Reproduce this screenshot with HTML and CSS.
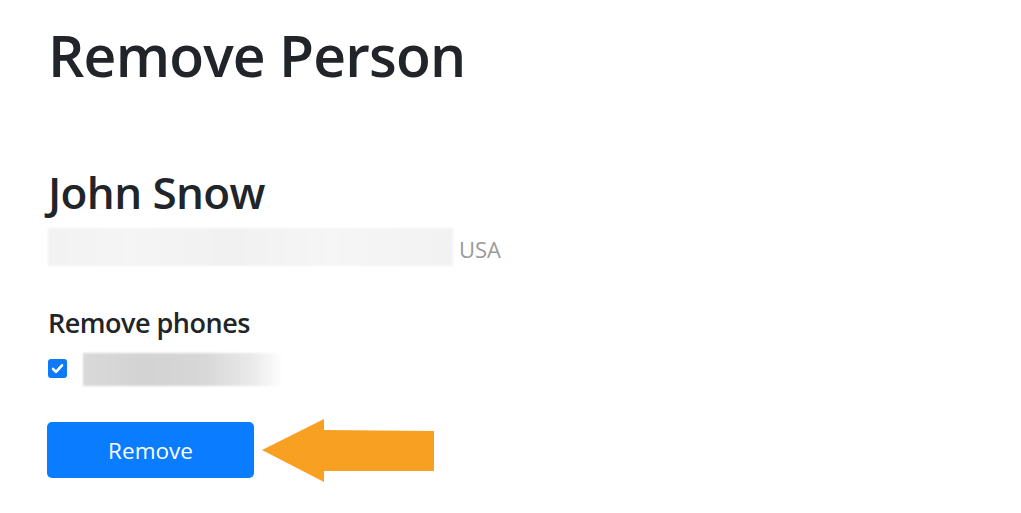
FILE: index.html
```html
<!DOCTYPE html>
<html lang="en">
<head>
<meta charset="utf-8">
<title>Remove Person</title>
<link rel="stylesheet" href="styles.css">
</head>
<body>
<main class="page">
  <h1 class="title">Remove Person</h1>
  <section class="person">
    <h2 class="name">John Snow</h2>
    <div class="address">
      <span class="blur blur-address"></span>
      <span class="country">USA</span>
    </div>
  </section>
  <section class="phones">
    <h3 class="phones-title">Remove phones</h3>
    <label class="phone-row">
      <span class="check">
        <svg viewBox="0 0 16 16" width="15" height="15"><path d="M3.2 8.4 L6.4 11.6 L12.8 4.6" fill="none" stroke="#fff" stroke-width="2.8" stroke-linecap="round" stroke-linejoin="round"/></svg>
      </span>
      <span class="blur blur-phone"></span>
    </label>
  </section>
  <div class="actions">
    <button class="btn" type="button">Remove</button>
    <svg class="arrow" viewBox="0 0 172 64" width="172" height="64">
      <polygon points="0,31 62,0 62,11 172,12 172,52 62,52 62,63" fill="#f7a021"/>
    </svg>
  </div>
</main>
</body>
</html>
```

FILE: styles.css
```css
* { box-sizing: border-box; }
html, body { margin: 0; background: #fff; }
body {
  font-family: "Open Sans", "Noto Sans", "Liberation Sans", sans-serif;
  color: #212529;
}
.page {
  padding: 20px 0 0 48px;
}
.title {
  margin: 0;
  font-size: 57px;
  font-weight: 600;
  line-height: 70px;
  letter-spacing: -0.8px;
}
.person {
  margin-top: 76px;
}
.name {
  margin: 0;
  font-size: 44px;
  font-weight: 600;
  line-height: 52px;
  letter-spacing: -0.6px;
}
.address {
  display: flex;
  align-items: center;
  margin-top: 10px;
}
.blur { display: block; }
.blur-address {
  width: 405px;
  height: 38px;
  background: linear-gradient(90deg, #f2f2f2, #f5f5f5 20%, #f1f1f1 45%, #f6f6f6 70%, #f2f2f2);
  filter: blur(1px);
}
.country {
  margin-left: 6px;
  margin-top: 4px;
  font-size: 22px;
  color: #9a9a9a;
}
.phones { margin-top: 40px; }
.phones-title {
  margin: 0;
  font-size: 27px;
  font-weight: 600;
  line-height: 34px;
  letter-spacing: -0.5px;
}
.phone-row {
  display: flex;
  align-items: center;
  margin-top: 10px;
}
.check {
  width: 19px;
  height: 19px;
  border-radius: 3px;
  background: #0d7bf7;
  display: flex;
  align-items: center;
  justify-content: center;
}
.blur-phone {
  margin-left: 16px;
  width: 200px;
  height: 33px;
  margin-top: 3px;
  background: linear-gradient(90deg, #d9d9d9, #d3d3d3 30%, #d7d7d7 60%, rgba(220,220,220,0.6) 85%, rgba(255,255,255,0));
  filter: blur(1px);
}
.actions {
  display: flex;
  align-items: center;
  margin-top: 31px;
}
.btn {
  width: 207px;
  height: 56px;
  border: 0;
  border-radius: 5px;
  background: #0a7cff;
  color: #fff;
  font-family: inherit;
  font-size: 22.5px;
  padding: 0;
  margin-left: -1px;
}
.arrow {
  margin-left: 8px;
  margin-top: 2px;
}
```
